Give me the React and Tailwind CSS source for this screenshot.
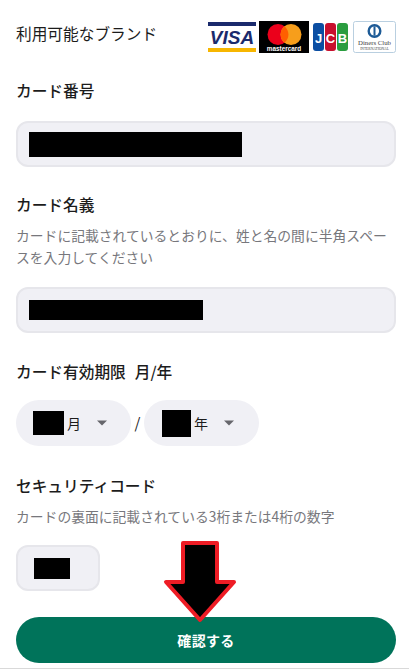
import React from 'react';

const Label = ({ children, className = '' }) => (
  <h2 className={`text-[15.7px] leading-6 font-medium text-[#1c1c1c] ${className}`}>{children}</h2>
);

const Caret = () => (
  <svg width="10" height="6" viewBox="0 0 10 6" className="shrink-0">
    <path d="M0 0.5h10L5 5.5z" fill="#66666c" />
  </svg>
);

const VisaLogo = () => (
  <div className="w-[48px] h-[30px] flex flex-col justify-between bg-white">
    <div className="h-[4px] bg-[#1a2a6c]" />
    <div className="text-center text-[#1a2a6c] text-[19px] leading-none font-bold italic font-['Liberation_Sans',sans-serif]">VISA</div>
    <div className="h-[4px] bg-[#f7b600]" />
  </div>
);

const MasterLogo = () => (
  <svg width="50" height="32" viewBox="0 0 50 32">
    <rect width="50" height="32" fill="#000" />
    <circle cx="19" cy="13.5" r="10.5" fill="#eb001b" />
    <circle cx="32" cy="13.5" r="10.5" fill="#f79e1b" />
    <path d="M25.5 5.3a10.5 10.5 0 0 1 0 16.4a10.5 10.5 0 0 1 0-16.4z" fill="#ff5f00" />
    <text x="25" y="30" textAnchor="middle" fontSize="6.4" fontWeight="700" fill="#fff" fontFamily="Liberation Sans, sans-serif">mastercard</text>
  </svg>
);

const JcbLogo = () => (
  <svg width="35" height="28" viewBox="0 0 35 28">
    <rect x="0" y="0" width="11" height="28" rx="3" fill="#0b4ea2" />
    <rect x="12" y="0" width="11" height="28" rx="3" fill="#c8102e" />
    <rect x="24" y="0" width="11" height="28" rx="3" fill="#2a9d3f" />
    <text x="5.5" y="19.5" textAnchor="middle" fontSize="13" fontWeight="700" fill="#fff" fontFamily="Liberation Sans, sans-serif">J</text>
    <text x="17.5" y="19.5" textAnchor="middle" fontSize="13" fontWeight="700" fill="#fff" fontFamily="Liberation Sans, sans-serif">C</text>
    <text x="29.5" y="19.5" textAnchor="middle" fontSize="13" fontWeight="700" fill="#fff" fontFamily="Liberation Sans, sans-serif">B</text>
  </svg>
);

const DinersLogo = () => (
  <svg width="43" height="32" viewBox="0 0 43 32">
    <rect x="0.5" y="0.5" width="42" height="31" rx="2" fill="#fff" stroke="#b9cfe0" />
    <circle cx="21.5" cy="10" r="7" fill="#1c5a96" />
    <circle cx="21.5" cy="10" r="4.6" fill="#fff" />
    <rect x="20.5" y="5.4" width="2" height="9.2" fill="#1c5a96" />
    <text x="21.5" y="23.5" textAnchor="middle" fontSize="6.8" fill="#444" fontFamily="Liberation Serif, serif">Diners Club</text>
    <text x="21.5" y="28.5" textAnchor="middle" fontSize="3.6" fill="#444" fontFamily="Liberation Serif, serif">INTERNATIONAL</text>
  </svg>
);

const Field = ({ mask, className = '' }) => (
  <div className={`h-[46px] rounded-xl bg-[#f0f0f5] border-2 border-[#e6e6eb] flex items-center ${className}`}>
    {mask}
  </div>
);

const DateSelect = ({ className, maskClass, unit }) => (
  <div className={`w-[115px] h-[46px] rounded-full bg-[#f0f0f5] flex items-center ${className}`}>
    <div className={`bg-black ${maskClass}`} />
    <span className="ml-[3px] text-[14px] text-[#1c1c1c]">{unit}</span>
    <span className="ml-[16px]"><Caret /></span>
  </div>
);

export default function App() {
  return (
    <div className="relative w-[409px] h-[669px] overflow-hidden bg-white pl-4 pr-[13px] font-['Noto_Sans_CJK_JP',sans-serif] border-b border-[#d9d9d9]">
      <div className="flex items-center justify-between pt-[21px] h-[53px]">
        <p className="text-[15.7px] text-[#1c1c1c] -mt-[6px]">利用可能なブランド</p>
        <div className="flex items-center">
          <VisaLogo />
          <span className="ml-[3px]"><MasterLogo /></span>
          <span className="ml-[4px]"><JcbLogo /></span>
          <span className="ml-[5px]"><DinersLogo /></span>
        </div>
      </div>

      <Label className="mt-[26px]">カード番号</Label>
      <Field className="mt-[18px] pl-[11px]" mask={<div className="w-[213px] h-[25px] bg-black" />} />

      <Label className="mt-[26px]">カード名義</Label>
      <p className="mt-[7px] text-[13.8px] leading-[22px] text-[#77777c]">カードに記載されているとおりに、姓と名の間に半角スペースを入力してください</p>
      <Field className="mt-[19px] pl-[11px]" mask={<div className="w-[174px] h-[20px] bg-black" />} />

      <Label className="mt-[27px]">カード有効期限<span className="ml-[9px]">月/年</span></Label>
      <div className="mt-[16px] flex items-center">
        <DateSelect className="pl-[17px]" maskClass="w-[31px] h-[24px]" unit="月" />
        <span className="w-[13px] text-center text-[15px] text-[#1c1c1c]">/</span>
        <DateSelect className="pl-[18px]" maskClass="w-[29px] h-[27px]" unit="年" />
      </div>

      <Label className="mt-[28px]">セキュリティコード</Label>
      <p className="mt-[7px] text-[13.8px] leading-[22px] text-[#77777c]">カードの裏面に記載されている3桁または4桁の数字</p>
      <Field className="mt-[18px] w-[84px] pl-[16px]" mask={<div className="w-[36px] h-[21px] bg-black" />} />

      <button className="mt-[26px] w-full h-[46px] rounded-full bg-[#00735a] text-white text-[14px] font-bold tracking-wide">確認する</button>

      <svg className="absolute left-[163px] top-[540px]" width="74" height="84" viewBox="0 0 74 84">
        <path d="M20 3h34v39h17L37 80L3 42h17z" fill="#000" stroke="#ee1c25" strokeWidth="4" strokeLinejoin="round" />
      </svg>
    </div>
  );
}
